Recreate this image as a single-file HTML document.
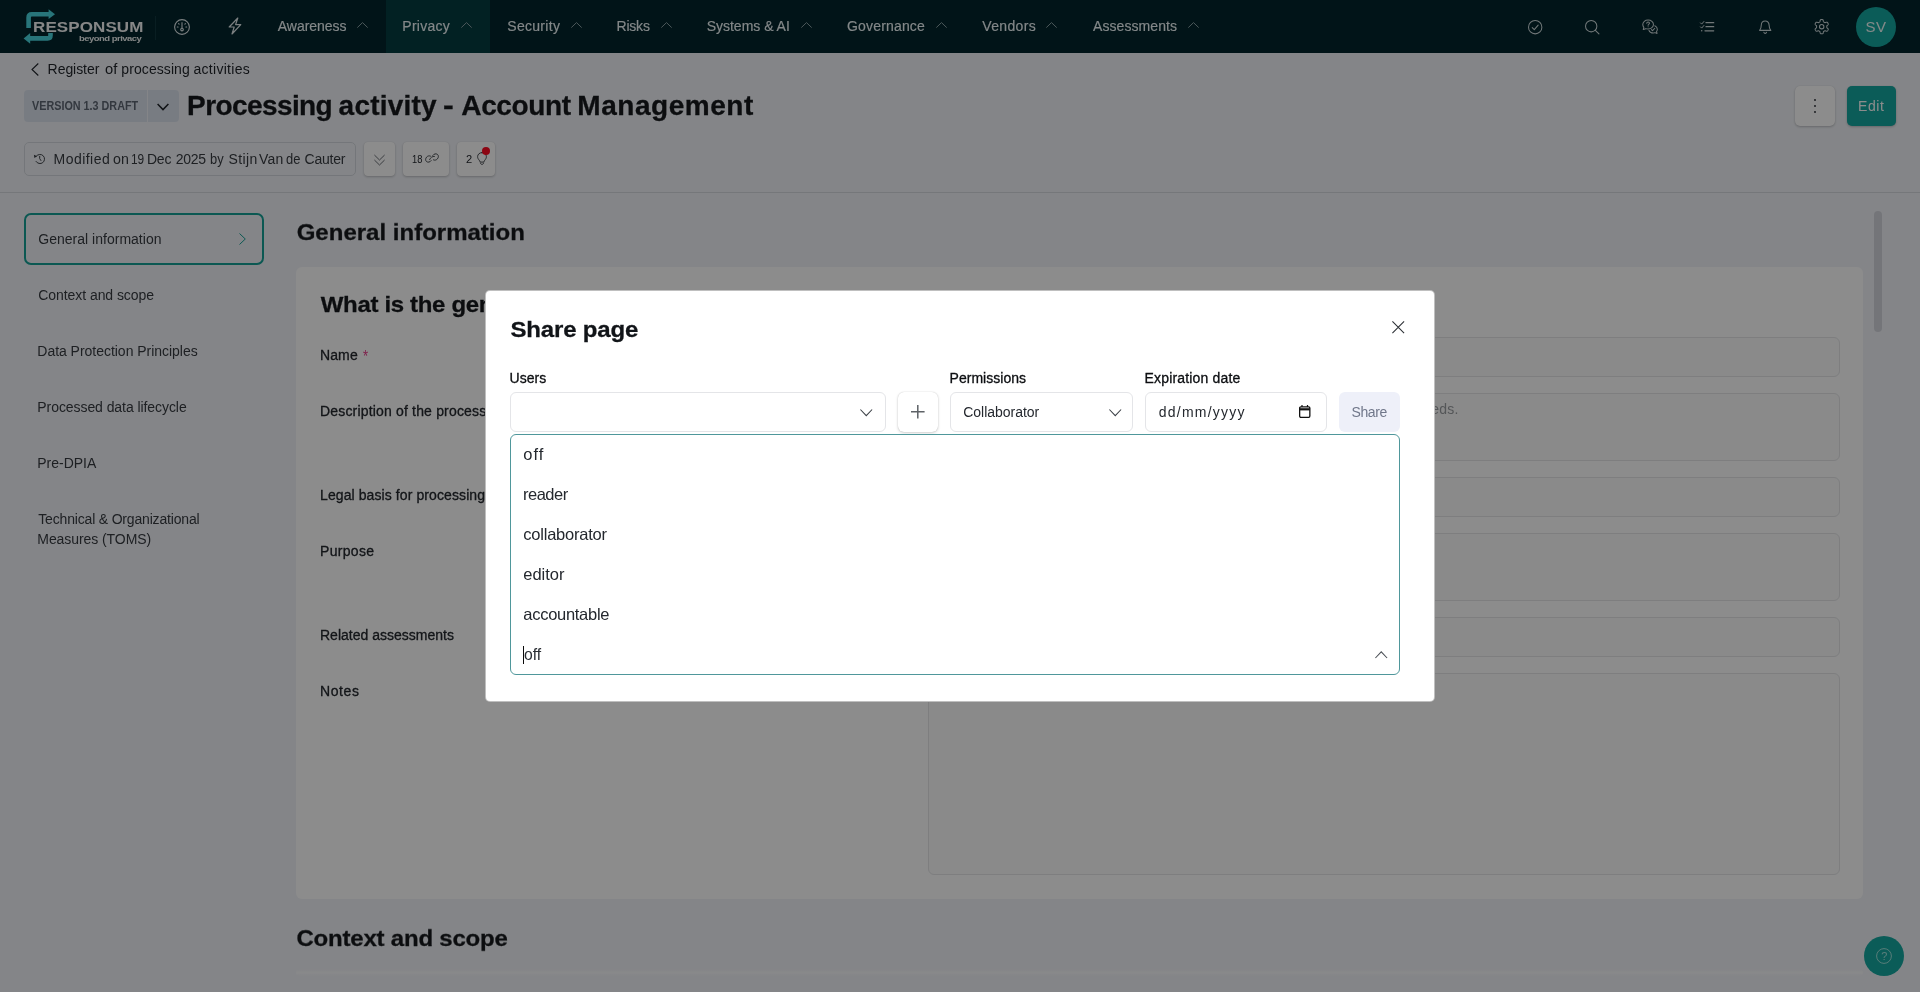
<!DOCTYPE html><html lang="en"><head><meta charset="utf-8"><title>Processing activity - Account Management</title><style>
*{box-sizing:border-box;margin:0;padding:0}
html,body{width:1920px;height:992px;overflow:hidden;background:#f1f3f8;font-family:"Liberation Sans",sans-serif;color:#212529}
#app{position:relative;width:1920px;height:992px;overflow:hidden;will-change:transform}
.t{position:absolute;white-space:nowrap;line-height:1;display:block}
.abs{position:absolute}
.w{position:absolute;left:0;top:0;width:0;height:0;font-size:14px;font-weight:400}
.w .t{font-size:inherit;font-weight:inherit;color:inherit}
svg{position:absolute;overflow:visible}
nav{position:absolute;left:0;top:0;width:1920px;height:52.8px;background:#02252c}
.navact{position:absolute;left:386px;top:0;width:104px;height:52.8px;background:#043c41}
.btn{position:absolute;background:#fff;border-radius:4px;box-shadow:0 1px 2.5px rgba(0,0,0,.22),0 0 1px rgba(0,0,0,.12)}
.fld{position:absolute;background:#fbfbfb;border:1px solid #e5e6e8;border-radius:6px}
.card{position:absolute;background:#fff;border-radius:6px}
.backdrop{position:absolute;left:0;top:0;width:1920px;height:992px;background:rgba(0,0,0,.45)}
.modal{position:absolute;left:484.7px;top:290.1px;width:950.7px;height:412px;background:#fff;border-radius:5px;border:1px solid rgba(0,0,0,.25)}
.inp{position:absolute;background:#fff;border:1px solid #e4e5e8;border-radius:6px}
</style></head><body><div id="app"><nav><div class="navact"></div><svg style="left:0;top:0" width="60" height="52" viewBox="0 0 60 52" fill="none" stroke="#49d6de" stroke-width="4.6" stroke-linejoin="miter">
<path d="M28.6 28 V17.5 Q28.6 14.3 31.800 14.3 H49.500" />
<path d="M48.600 9.200 L55 14.200 L48.600 19 Z" fill="#49d6de" stroke="none"/>
<path d="M50.500 33 V35.500 Q50.500 38.400 47.600 38.400 H29.500" />
<path d="M30.200 33 L23.600 38.400 L30.200 43.800 Z" fill="#49d6de" stroke="none"/>
</svg><span class="t" style="left:33.00px;top:17.51px;font-size:17px;font-weight:700;color:#f4f6f6;letter-spacing:0.099px;transform:scaleY(0.875);transform-origin:0 84.65%;">RESPONSUM</span><span class="t" style="left:79.00px;top:32.86px;font-size:9.5px;font-weight:700;color:#eef2f2;letter-spacing:-0.524px;transform:scaleY(0.85);transform-origin:0 84.65%;">beyond privacy</span><div class="abs" style="left:155px;top:16px;width:1px;height:23.5px;background:#12383f"></div><svg style="left:174.1px;top:18.750px" width="16" height="16" viewBox="0 0 16 16" fill="none" stroke="#e2eaec" stroke-width="1.1">
<circle cx="8" cy="8" r="7.4"/><path d="M8 3.2V9.3"/><circle cx="8" cy="10.6" r="1.3"/>
<path d="M3.3 8h.8M11.9 8h.8M4.6 4.6l.5.5M11.4 4.6l-.5.5" stroke-linecap="round"/></svg><svg style="left:227px;top:17.100px" width="16" height="18" viewBox="0 0 16 18" fill="none" stroke="#e2eaec" stroke-width="1.2" stroke-linejoin="round">
<path d="M10.8 1 L2.2 10 H7.2 L5 17 L13.8 7.6 H8.6 Z"/></svg><span class="t" style="left:277.80px;top:19.15px;font-size:14px;font-weight:400;color:#eef6f8;letter-spacing:-0.050px;-webkit-text-stroke:0.12px #eef6f8;">Awareness</span><svg style="left:357px;top:21.5px" width="11" height="6" viewBox="0 0 11 6" fill="none" stroke="#8aa0a4" stroke-width="1"><path d="M0.3 5.6 L5.5 0.6 L10.7 5.6"/></svg><span class="t" style="left:402.30px;top:19.15px;font-size:14px;font-weight:400;color:#eef6f8;letter-spacing:0.251px;-webkit-text-stroke:0.12px #eef6f8;">Privacy</span><svg style="left:461px;top:21.5px" width="11" height="6" viewBox="0 0 11 6" fill="none" stroke="#8aa0a4" stroke-width="1"><path d="M0.3 5.6 L5.5 0.6 L10.7 5.6"/></svg><span class="t" style="left:507.30px;top:19.15px;font-size:14px;font-weight:400;color:#eef6f8;letter-spacing:0.290px;-webkit-text-stroke:0.12px #eef6f8;">Security</span><svg style="left:571.2px;top:21.5px" width="11" height="6" viewBox="0 0 11 6" fill="none" stroke="#8aa0a4" stroke-width="1"><path d="M0.3 5.6 L5.5 0.6 L10.7 5.6"/></svg><span class="t" style="left:616.50px;top:19.15px;font-size:14px;font-weight:400;color:#eef6f8;letter-spacing:-0.205px;-webkit-text-stroke:0.12px #eef6f8;">Risks</span><svg style="left:660.8px;top:21.5px" width="11" height="6" viewBox="0 0 11 6" fill="none" stroke="#8aa0a4" stroke-width="1"><path d="M0.3 5.6 L5.5 0.6 L10.7 5.6"/></svg><span class="t" style="left:706.70px;top:19.15px;font-size:14px;font-weight:400;color:#eef6f8;letter-spacing:-0.012px;-webkit-text-stroke:0.12px #eef6f8;">Systems &amp; AI</span><svg style="left:801px;top:21.5px" width="11" height="6" viewBox="0 0 11 6" fill="none" stroke="#8aa0a4" stroke-width="1"><path d="M0.3 5.6 L5.5 0.6 L10.7 5.6"/></svg><span class="t" style="left:847.00px;top:19.15px;font-size:14px;font-weight:400;color:#eef6f8;letter-spacing:0.169px;-webkit-text-stroke:0.12px #eef6f8;">Governance</span><svg style="left:936px;top:21.5px" width="11" height="6" viewBox="0 0 11 6" fill="none" stroke="#8aa0a4" stroke-width="1"><path d="M0.3 5.6 L5.5 0.6 L10.7 5.6"/></svg><span class="t" style="left:982.30px;top:19.15px;font-size:14px;font-weight:400;color:#eef6f8;letter-spacing:0.338px;-webkit-text-stroke:0.12px #eef6f8;">Vendors</span><svg style="left:1046px;top:21.5px" width="11" height="6" viewBox="0 0 11 6" fill="none" stroke="#8aa0a4" stroke-width="1"><path d="M0.3 5.6 L5.5 0.6 L10.7 5.6"/></svg><span class="t" style="left:1093.00px;top:19.15px;font-size:14px;font-weight:400;color:#eef6f8;letter-spacing:0.075px;-webkit-text-stroke:0.12px #eef6f8;">Assessments</span><svg style="left:1188.3px;top:21.5px" width="11" height="6" viewBox="0 0 11 6" fill="none" stroke="#8aa0a4" stroke-width="1"><path d="M0.3 5.6 L5.5 0.6 L10.7 5.6"/></svg><svg style="left:1527.70px;top:19.65px" width="14.4" height="14.4" viewBox="0 0 15.3 15.3" fill="none" stroke="#cfdadc" stroke-width="1.1" stroke-linecap="round" stroke-linejoin="round"><circle cx="7.65" cy="7.65" r="7.1"/><path d="M4.5 8l2.200 2.200 4.100-4.700"/></svg><svg style="left:1584.70px;top:19.55px" width="14.4" height="14.4" viewBox="0 0 16 16" fill="none" stroke="#cfdadc" stroke-width="1.15" stroke-linecap="round" stroke-linejoin="round"><circle cx="6.900" cy="6.900" r="6.300"/><path d="M11.500 11.500l4 4"/></svg><svg style="left:1641.75px;top:18.80px" width="16.5" height="16" viewBox="0 0 17 16" fill="none" stroke="#cfdadc" stroke-width="1.05" stroke-linecap="round" stroke-linejoin="round"><path d="M6.3 0.8C3.2 0.8 0.8 2.9 0.8 5.5c0 1.1.4 2.1 1.1 2.9L1.3 10.6l2.600-.900c.7.300 1.500.400 2.400.400 3.100 0 5.500-2.100 5.500-4.700S9.400.8 6.300.8z"/><path d="M4.900 4.200c0-.8.600-1.300 1.400-1.300s1.400.5 1.400 1.200c0 1-1.400 1-1.400 2.100M6.300 7.700v.1"/><path d="M7.200 11.600c.7 1.600 2.400 2.600 4.300 2.600.7 0 1.300-.1 1.900-.4l2.100.8-.5-1.900c.5-.7.800-1.500.8-2.300 0-1.600-1-3-2.600-3.700"/><path d="M9.700 10.600l1.200 1.200 2.300-2.500"/></svg><svg style="left:1700.00px;top:20.85px" width="14.2" height="11.4" viewBox="0 0 14.2 11.4" fill="none" stroke="#cfdadc" stroke-width="1.0" stroke-linecap="round" stroke-linejoin="round"><path d="M0.5 1.900l1.200 1.200 2.200-2.600M0.500 5.900l1.200 1.200 2.200-2.600"/><path d="M6 1.700h7.700M6 5.650h7.700M5 9.800h8.700" stroke-width="1.3"/><circle cx="1.700" cy="9.800" r=".75" fill="#cfdadc" stroke="none"/></svg><svg style="left:1758.70px;top:20.05px" width="12.4" height="14" viewBox="0 0 12.4 14" fill="none" stroke="#cfdadc" stroke-width="1.05" stroke-linecap="round" stroke-linejoin="round"><path d="M6.200 .9c-2.300 0-3.900 1.800-3.900 4.200 0 2.400-.6 4-1.700 5.300h11.200c-1.100-1.300-1.700-2.900-1.700-5.300 0-2.400-1.600-4.200-3.900-4.200z"/><path d="M4.900 12.300c.2.700.7 1.100 1.300 1.100s1.100-.4 1.300-1.100"/></svg><svg style="left:1814.30px;top:18.90px" width="15.4" height="15.4" viewBox="0 0 15.4 15.4" fill="none" stroke="#cfdadc" stroke-width="1.05" stroke-linecap="round" stroke-linejoin="round"><path d="M7.70 0.55 L7.89 0.56 L8.07 0.57 L8.26 0.59 L8.44 0.62 L8.63 0.67 L8.80 0.75 L8.96 0.89 L9.10 1.10 L9.21 1.41 L9.29 1.78 L9.34 2.16 L9.40 2.46 L9.48 2.68 L9.57 2.83 L9.67 2.93 L9.79 3.01 L9.90 3.08 L10.02 3.15 L10.14 3.21 L10.25 3.28 L10.37 3.35 L10.48 3.42 L10.60 3.48 L10.72 3.55 L10.84 3.61 L10.98 3.65 L11.16 3.65 L11.38 3.61 L11.68 3.51 L12.03 3.37 L12.39 3.25 L12.71 3.19 L12.97 3.20 L13.17 3.27 L13.32 3.38 L13.46 3.52 L13.58 3.66 L13.69 3.81 L13.79 3.97 L13.89 4.13 L13.98 4.29 L14.06 4.46 L14.14 4.63 L14.20 4.80 L14.25 4.99 L14.27 5.18 L14.23 5.39 L14.11 5.62 L13.90 5.86 L13.62 6.11 L13.32 6.35 L13.09 6.56 L12.93 6.73 L12.85 6.88 L12.82 7.03 L12.80 7.16 L12.80 7.30 L12.80 7.43 L12.80 7.57 L12.80 7.70 L12.80 7.83 L12.80 7.97 L12.80 8.10 L12.80 8.24 L12.82 8.37 L12.85 8.52 L12.93 8.67 L13.09 8.84 L13.32 9.05 L13.62 9.29 L13.90 9.54 L14.11 9.78 L14.23 10.01 L14.27 10.22 L14.25 10.41 L14.20 10.60 L14.14 10.77 L14.06 10.94 L13.98 11.11 L13.89 11.27 L13.79 11.43 L13.69 11.59 L13.58 11.74 L13.46 11.88 L13.32 12.02 L13.17 12.13 L12.97 12.20 L12.71 12.21 L12.39 12.15 L12.03 12.03 L11.68 11.89 L11.38 11.79 L11.16 11.75 L10.98 11.75 L10.84 11.79 L10.72 11.85 L10.60 11.92 L10.48 11.98 L10.37 12.05 L10.25 12.12 L10.14 12.19 L10.02 12.25 L9.90 12.32 L9.79 12.39 L9.67 12.47 L9.57 12.57 L9.48 12.72 L9.40 12.94 L9.34 13.24 L9.29 13.62 L9.21 13.99 L9.10 14.30 L8.96 14.51 L8.80 14.65 L8.63 14.73 L8.44 14.78 L8.26 14.81 L8.07 14.83 L7.89 14.84 L7.70 14.85 L7.51 14.84 L7.33 14.83 L7.14 14.81 L6.96 14.78 L6.77 14.73 L6.60 14.65 L6.44 14.51 L6.30 14.30 L6.19 13.99 L6.11 13.62 L6.06 13.24 L6.00 12.94 L5.92 12.72 L5.83 12.57 L5.73 12.47 L5.61 12.39 L5.50 12.32 L5.38 12.25 L5.26 12.19 L5.15 12.12 L5.03 12.05 L4.92 11.98 L4.80 11.92 L4.68 11.85 L4.56 11.79 L4.42 11.75 L4.24 11.75 L4.02 11.79 L3.72 11.89 L3.37 12.03 L3.01 12.15 L2.69 12.21 L2.43 12.20 L2.23 12.13 L2.08 12.02 L1.94 11.88 L1.82 11.74 L1.71 11.59 L1.61 11.43 L1.51 11.27 L1.42 11.11 L1.34 10.94 L1.26 10.77 L1.20 10.60 L1.15 10.41 L1.13 10.22 L1.17 10.01 L1.29 9.78 L1.50 9.54 L1.78 9.29 L2.08 9.05 L2.31 8.84 L2.47 8.67 L2.55 8.52 L2.58 8.37 L2.60 8.24 L2.60 8.10 L2.60 7.97 L2.60 7.83 L2.60 7.70 L2.60 7.57 L2.60 7.43 L2.60 7.30 L2.60 7.16 L2.58 7.03 L2.55 6.88 L2.47 6.73 L2.31 6.56 L2.08 6.35 L1.78 6.11 L1.50 5.86 L1.29 5.62 L1.17 5.39 L1.13 5.18 L1.15 4.99 L1.20 4.80 L1.26 4.63 L1.34 4.46 L1.42 4.29 L1.51 4.13 L1.61 3.97 L1.71 3.81 L1.82 3.66 L1.94 3.52 L2.08 3.38 L2.23 3.27 L2.43 3.20 L2.69 3.19 L3.01 3.25 L3.37 3.37 L3.72 3.51 L4.02 3.61 L4.24 3.65 L4.42 3.65 L4.56 3.61 L4.68 3.55 L4.80 3.48 L4.92 3.42 L5.03 3.35 L5.15 3.28 L5.26 3.21 L5.38 3.15 L5.50 3.08 L5.61 3.01 L5.73 2.93 L5.83 2.83 L5.92 2.68 L6.00 2.46 L6.06 2.16 L6.11 1.78 L6.19 1.41 L6.30 1.10 L6.44 0.89 L6.60 0.75 L6.77 0.67 L6.96 0.62 L7.14 0.59 L7.33 0.57 L7.51 0.56Z"/><circle cx="7.7" cy="7.7" r="2.200"/></svg><div class="abs" style="left:1856px;top:7px;width:40px;height:40px;border-radius:50%;background:#15a8a0"></div><span class="t" style="left:1865.60px;top:19.10px;font-size:15px;font-weight:400;color:#eefaf9;letter-spacing:0.395px;">SV</span></nav><header><svg style="left:30.5px;top:62.5px" width="8" height="13" viewBox="0 0 8 13" fill="none" stroke="#1f2329" stroke-width="1.1"><path d="M7.3 0.5 L1 6.5 L7.3 12.5"/></svg><a class="w" style="font-size:14px;font-weight:400;color:#1f2329;"><span class="t" style="left:47.60px;top:61.75px;letter-spacing:-0.053px;">Register</span> <span class="t" style="left:104.60px;top:61.75px;transform:scaleX(1.0521);transform-origin:0 84.65%;">of</span> <span class="t" style="left:121.30px;top:61.75px;letter-spacing:0.087px;">processing</span> <span class="t" style="left:193.40px;top:61.75px;letter-spacing:0.302px;">activities</span></a><div class="abs" style="left:24px;top:90px;width:123px;height:31.5px;background:#dbe2ed;border-radius:4px 0 0 4px"></div><div class="abs" style="left:148px;top:90px;width:30.5px;height:31.5px;background:#dbe2ed;border-radius:0 4px 4px 0"></div><span class="t" style="left:32.30px;top:99.40px;font-size:13px;font-weight:700;color:#5d6673;transform:scaleX(0.8302);transform-origin:0 84.65%;">VERSION 1.3 DRAFT</span><svg style="left:157px;top:102.5px" width="12" height="8" viewBox="0 0 12 8" fill="none" stroke="#1f2329" stroke-width="1.5"><path d="M0.6 1 L6 6.6 L11.4 1"/></svg><h1 class="w" style="font-size:28px;font-weight:700;color:#16191d;-webkit-text-stroke:0.3px #16191d;"><span class="t" style="left:187.10px;top:92.10px;letter-spacing:-0.594px;">Processing</span> <span class="t" style="left:338.60px;top:92.10px;letter-spacing:0.211px;">activity</span> <span class="t" style="left:442.95px;top:92.10px;transform:scaleX(1.1500);transform-origin:0 84.65%;">-</span> <span class="t" style="left:461.30px;top:92.10px;letter-spacing:-0.363px;">Account</span> <span class="t" style="left:577.30px;top:92.10px;letter-spacing:0.542px;">Management</span></h1><div class="btn" style="left:1795px;top:86px;width:40px;height:40px;border-radius:5px"></div><svg style="left:1813px;top:98px" width="4" height="16" viewBox="0 0 4 16" fill="#1f2329"><circle cx="2" cy="2" r="0.9"/><circle cx="2" cy="8" r="0.9"/><circle cx="2" cy="14" r="0.9"/></svg><div class="btn" style="left:1847px;top:86px;width:49px;height:40px;border-radius:5px;background:#15a8a0"></div><span class="t" style="left:1858.00px;top:99.15px;font-size:14px;font-weight:400;color:#ffffff;letter-spacing:0.589px;">Edit</span><div class="abs" style="left:24px;top:142px;width:332px;height:34px;border:1px solid #d3d7de;border-radius:5px"></div><svg style="left:0;top:0" width="60" height="180" viewBox="0 0 60 180" fill="none" stroke="#373b41" stroke-width="0.95" stroke-linecap="round">
<path d="M36.38 156.04A4.6 4.6 0 1 1 36.00 161.44"/><path d="M33.900 154.700L37 156.300L34.400 157.900Z" fill="#373b41" stroke="none"/><path d="M39.700 156.300V158.600L40.900 160.500"/></svg><div class="w" style="font-size:14px;font-weight:400;color:#373b41;"><span class="t" style="left:53.50px;top:152.15px;letter-spacing:0.467px;">Modified</span> <span class="t" style="left:113.00px;top:152.15px;transform:scaleX(1.0145);transform-origin:0 84.65%;">on</span> <span class="t" style="left:131.05px;top:152.15px;transform:scaleX(0.8500);transform-origin:0 84.65%;">19</span> <span class="t" style="left:146.90px;top:152.15px;letter-spacing:-0.198px;">Dec</span> <span class="t" style="left:175.80px;top:152.15px;letter-spacing:-0.286px;">2025</span> <span class="t" style="left:210.40px;top:152.15px;transform:scaleX(0.9198);transform-origin:0 84.65%;">by</span> <span class="t" style="left:228.60px;top:152.15px;letter-spacing:0.338px;">Stijn</span> <span class="t" style="left:259.10px;top:152.15px;letter-spacing:0.108px;">Van</span> <span class="t" style="left:285.60px;top:152.15px;transform:scaleX(0.9249);transform-origin:0 84.65%;">de</span> <span class="t" style="left:304.60px;top:152.15px;letter-spacing:-0.232px;">Cauter</span></div><div class="btn" style="left:364px;top:142px;width:31px;height:34px"></div><svg style="left:374px;top:153.5px" width="11" height="12" viewBox="0 0 11 12" fill="none" stroke="#5a5f66" stroke-width="0.9"><path d="M0.4 1 L5.5 6 L10.6 1M0.4 6 L5.5 11 L10.6 6"/></svg><div class="btn" style="left:403px;top:142px;width:46px;height:34px"></div><span class="t" style="left:411.90px;top:153.77px;font-size:11.5px;font-weight:400;color:#1f2329;transform:scaleX(0.8148);transform-origin:0 84.65%;">18</span><svg style="left:425.2px;top:153px" width="14" height="10" viewBox="0 0 14 10" fill="none" stroke="#373b41" stroke-width="0.9" stroke-linecap="round">
<path d="M6.2 7.6C5 9.3 2.9 9.6 1.6 8.600S.3 5.600 1.600 4.100C2.800 2.800 4.300 2.500 5.500 3.100"/><path d="M7.800 2.400C9 .7 11.100 .4 12.400 1.400s1.300 3 0 4.500C11.200 7.200 9.700 7.500 8.500 6.900"/><path d="M4.600 6.600C5.400 4.600 7.400 3.100 9.400 3.400" /></svg><div class="btn" style="left:457px;top:142px;width:38px;height:34px"></div><span class="t" style="left:466.00px;top:153.77px;font-size:11.5px;font-weight:400;color:#1f2329;transform:scaleX(0.9667);transform-origin:0 84.65%;">2</span><svg style="left:476.8px;top:151.9px" width="10" height="13" viewBox="0 0 10 13" fill="none" stroke="#373b41" stroke-width="0.9" stroke-linecap="round" stroke-linejoin="round">
<path d="M5 .6C2.500 .6 .6 2.400 .6 4.700c0 1.500.8 2.500 1.600 3.500.5.600.8 1.200.9 1.900h3.800c.1-.7.4-1.300.9-1.900.8-1 1.600-2 1.600-3.500C9.400 2.400 7.500.6 5 .6z"/><path d="M3.400 11.200c.3.800.9 1.200 1.600 1.200s1.300-.4 1.600-1.200"/></svg><div class="abs" style="left:482px;top:146.8px;width:8px;height:8px;border-radius:50%;background:#ff0a22"></div><div class="abs" style="left:0;top:192px;width:1920px;height:1px;background:#d6d9df"></div></header><aside><div class="abs" style="left:24px;top:213px;width:240px;height:52px;border:2px solid #14a096;border-radius:7px"></div><svg style="left:238.5px;top:233px" width="7" height="12" viewBox="0 0 7 12" fill="none" stroke="#17a096" stroke-width="1"><path d="M0.5 0.5 L6.3 6 L0.5 11.500"/></svg><span class="t" style="left:38.30px;top:232.15px;font-size:14px;font-weight:400;color:#373b41;letter-spacing:0.013px;">General information</span><span class="t" style="left:38.30px;top:288.35px;font-size:14px;font-weight:400;color:#373b41;letter-spacing:-0.066px;">Context and scope</span><span class="t" style="left:37.30px;top:344.35px;font-size:14px;font-weight:400;color:#373b41;letter-spacing:-0.027px;">Data Protection Principles</span><span class="t" style="left:37.30px;top:400.35px;font-size:14px;font-weight:400;color:#373b41;letter-spacing:-0.069px;">Processed data lifecycle</span><span class="t" style="left:37.30px;top:456.35px;font-size:14px;font-weight:400;color:#373b41;letter-spacing:-0.012px;">Pre-DPIA</span><span class="t" style="left:38.30px;top:512.35px;font-size:14px;font-weight:400;color:#373b41;letter-spacing:-0.178px;">Technical &amp; Organizational</span><span class="t" style="left:37.30px;top:532.35px;font-size:14px;font-weight:400;color:#373b41;letter-spacing:-0.072px;">Measures (TOMS)</span></aside><main><h2 class="t" style="left:296.70px;top:220.48px;font-size:24px;font-weight:700;color:#16191d;letter-spacing:0.007px;transform:scaleY(0.933);transform-origin:0 84.65%;-webkit-text-stroke:0.3px #16191d;">General information</h2><div class="card" style="left:296px;top:266.5px;width:1567px;height:632.5px"></div><h3 class="t" style="left:320.80px;top:292.18px;font-size:24px;font-weight:700;color:#16191d;letter-spacing:-0.341px;transform:scaleY(0.933);transform-origin:0 84.65%;-webkit-text-stroke:0.3px #16191d;">What is the general information?</h3><label class="t" style="left:320.00px;top:347.95px;font-size:14px;font-weight:400;color:#24282e;letter-spacing:0.114px;-webkit-text-stroke:0.3px #24282e;">Name</label><label class="t" style="left:320.00px;top:403.95px;font-size:14px;font-weight:400;color:#24282e;letter-spacing:0.174px;-webkit-text-stroke:0.3px #24282e;">Description of the processing</label><label class="t" style="left:320.00px;top:487.95px;font-size:14px;font-weight:400;color:#24282e;letter-spacing:0.094px;-webkit-text-stroke:0.3px #24282e;">Legal basis for processing</label><label class="t" style="left:320.00px;top:543.95px;font-size:14px;font-weight:400;color:#24282e;letter-spacing:0.307px;-webkit-text-stroke:0.3px #24282e;">Purpose</label><label class="t" style="left:320.00px;top:627.95px;font-size:14px;font-weight:400;color:#24282e;letter-spacing:0.003px;-webkit-text-stroke:0.3px #24282e;">Related assessments</label><label class="t" style="left:320.00px;top:683.95px;font-size:14px;font-weight:400;color:#24282e;letter-spacing:0.607px;-webkit-text-stroke:0.3px #24282e;">Notes</label><span class="t" style="left:363.20px;top:348.01px;font-size:17px;font-weight:400;color:#e83e8c;transform:scaleX(0.7714);transform-origin:0 84.65%;">*</span><div class="fld" style="left:928px;top:337px;width:912px;height:39.5px"></div><div class="fld" style="left:928px;top:393px;width:912px;height:67.5px"></div><div class="fld" style="left:928px;top:477px;width:912px;height:39.5px"></div><div class="fld" style="left:928px;top:533px;width:912px;height:67.5px"></div><div class="fld" style="left:928px;top:617px;width:912px;height:39.5px"></div><div class="fld" style="left:928px;top:673px;width:912px;height:202px"></div><span class="t" style="left:1082.09px;top:402.15px;font-size:14px;font-weight:400;color:#9a9da1;letter-spacing:0.150px;">Managing customer accounts according to business needs.</span><h2 class="t" style="left:296.50px;top:926.38px;font-size:24px;font-weight:700;color:#16191d;letter-spacing:-0.209px;transform:scaleY(0.933);transform-origin:0 84.65%;-webkit-text-stroke:0.3px #16191d;">Context and scope</h2><div class="abs" style="left:296px;top:969px;width:1567px;height:7px;border-radius:4px;background:linear-gradient(to bottom,rgba(255,255,255,0),rgba(255,255,255,.55) 55%,rgba(255,255,255,0))"></div><div class="abs" style="left:1874px;top:211px;width:8px;height:121px;border-radius:4px;background:#d3d6dd"></div><div class="abs" style="left:1864px;top:936px;width:40px;height:40px;border-radius:50%;background:#15a8a0"></div><svg style="left:1876px;top:948px" width="16" height="16" viewBox="0 0 16 16" fill="none" stroke="#9fe3dd" stroke-width="1"><circle cx="8" cy="8" r="7.400"/></svg><span class="t" style="left:1881.30px;top:950.89px;font-size:11px;font-weight:400;color:#9fe3dd;letter-spacing:-0.600px;">?</span></main><div class="backdrop"></div><section role="dialog" aria-label="Share page"><div class="modal"></div><h2 class="t" style="left:510.50px;top:317.18px;font-size:24px;font-weight:700;color:#111418;letter-spacing:-0.171px;transform:scaleY(0.933);transform-origin:0 84.65%;-webkit-text-stroke:0.3px #111418;">Share page</h2><svg style="left:1392px;top:321px" width="12.5" height="12.500" viewBox="0 0 12.5 12.5" fill="none" stroke="#2b2f34" stroke-width="1.05"><path d="M0.4 0.4 L12.100 12.100 M12.100 0.4 L0.4 12.100"/></svg><label class="t" style="left:509.60px;top:371.15px;font-size:14px;font-weight:400;color:#0c0e11;letter-spacing:0.035px;-webkit-text-stroke:0.3px #0c0e11;">Users</label><label class="t" style="left:949.60px;top:371.15px;font-size:14px;font-weight:400;color:#0c0e11;letter-spacing:0.016px;-webkit-text-stroke:0.3px #0c0e11;">Permissions</label><label class="t" style="left:1144.50px;top:371.15px;font-size:14px;font-weight:400;color:#0c0e11;letter-spacing:0.171px;-webkit-text-stroke:0.3px #0c0e11;">Expiration date</label><div class="inp" style="left:510px;top:392px;width:376px;height:39.5px"></div><svg style="left:860px;top:408.8px" width="12.5" height="7.500" viewBox="0 0 12.5 7.5" fill="none" stroke="#3a3f45" stroke-width="1.05"><path d="M0.4 0.5 L6.250 6.700 L12.100 0.5"/></svg><div class="btn" style="left:898px;top:392px;width:40px;height:40px;border-radius:6px;box-shadow:0 1px 3px rgba(0,0,0,.18),0 0 1px rgba(0,0,0,.2)"></div><svg style="left:911.2px;top:405.2px" width="13.6" height="13.6" viewBox="0 0 13.6 13.6" fill="none" stroke="#5e6267" stroke-width="1.5"><path d="M6.800 0 V13.600 M0 6.800 H13.600"/></svg><div class="inp" style="left:950px;top:392px;width:182.5px;height:39.5px"></div><span class="t" style="left:963.30px;top:405.15px;font-size:14px;font-weight:400;color:#24282e;letter-spacing:-0.036px;">Collaborator</span><svg style="left:1109px;top:408.8px" width="12.5" height="7.500" viewBox="0 0 12.5 7.5" fill="none" stroke="#3a3f45" stroke-width="1.05"><path d="M0.4 0.5 L6.250 6.700 L12.100 0.5"/></svg><div class="inp" style="left:1145px;top:392px;width:181.5px;height:39.5px"></div><span class="t" style="left:1158.80px;top:405.15px;font-size:14px;font-weight:400;color:#24282e;letter-spacing:1.225px;">dd/mm/yyyy</span><svg style="left:1299.300px;top:405px" width="11.5" height="13" viewBox="0 0 11.5 13" fill="none" stroke="#111" stroke-width="1.300"><rect x="0.650" y="1.800" width="10.200" height="10.500" rx="1.200"/><path d="M0.650 4.300H10.850" stroke-width="2.200"/><path d="M3 0V2M8.500 0V2" stroke-width="1.200"/></svg><div class="abs" style="left:1339.3px;top:392px;width:60.7px;height:40px;border-radius:6px;background:#eef0f9"></div><span class="t" style="left:1351.50px;top:405.15px;font-size:14px;font-weight:400;color:#70778a;letter-spacing:-0.393px;">Share</span><div class="abs" style="left:510px;top:434px;width:890px;height:240.5px;border:1px solid #4f979b;border-radius:6px;background:#fff"></div><ul role="listbox"><li class="t" style="left:523.30px;top:446.03px;font-size:16.5px;font-weight:400;color:#24282e;letter-spacing:1.019px;">off</li><li class="t" style="left:522.90px;top:486.33px;font-size:16.5px;font-weight:400;color:#24282e;letter-spacing:-0.460px;">reader</li><li class="t" style="left:523.30px;top:526.33px;font-size:16.5px;font-weight:400;color:#24282e;letter-spacing:-0.229px;">collaborator</li><li class="t" style="left:523.30px;top:566.33px;font-size:16.5px;font-weight:400;color:#24282e;letter-spacing:-0.016px;">editor</li><li class="t" style="left:523.30px;top:606.33px;font-size:16.5px;font-weight:400;color:#24282e;letter-spacing:-0.281px;">accountable</li></ul><span class="t" style="left:523.70px;top:645.93px;font-size:16.5px;font-weight:400;color:#2b2f35;transform:scaleX(0.9533);transform-origin:0 84.65%;">off</span><div class="abs" style="left:522.9px;top:646px;width:1.2px;height:18px;background:#0a0a0a"></div><svg style="left:1375px;top:650.5px" width="12.5" height="7.500" viewBox="0 0 12.5 7.5" fill="none" stroke="#4a4f55" stroke-width="1.05"><path d="M0.4 7 L6.250 0.8 L12.100 7"/></svg></section></div></body></html>
